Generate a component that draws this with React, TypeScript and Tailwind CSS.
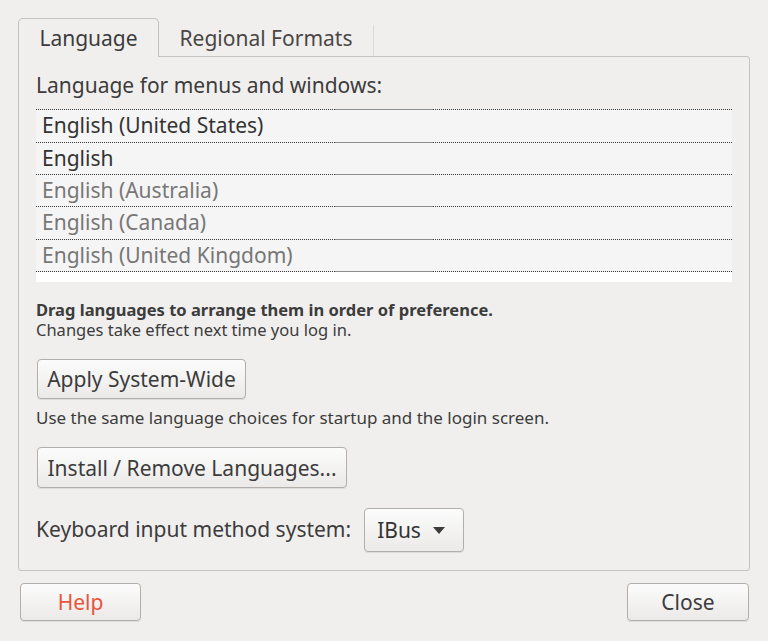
import React from 'react';

const font = { fontFamily: '"Noto Sans", "DejaVu Sans", sans-serif' };

const Separator = () => (
  <div className="flex h-px">
    <div className="w-[299px] border-t border-dotted border-[#3a3a3a]" />
    <div className="w-[98px] border-t border-[#8e8e8e]" />
    <div className="flex-1 border-t border-dotted border-[#3a3a3a]" />
  </div>
);

const languages = [
  { name: 'English (United States)', active: true, h: 'h-[32px]' },
  { name: 'English', active: true, h: 'h-[31px]' },
  { name: 'English (Australia)', active: false, h: 'h-[31px]' },
  { name: 'English (Canada)', active: false, h: 'h-[32px]' },
  { name: 'English (United Kingdom)', active: false, h: 'h-[31px]' },
];

const GtkButton: React.FC<{ className?: string; children: React.ReactNode }> = ({ className = '', children }) => (
  <button
    className={`rounded-[4px] border border-[#b2afab] bg-gradient-to-b from-[#fcfcfc] to-[#ebeae8] shadow-[0_1px_0_rgba(0,0,0,0.08)] text-[21px] leading-[26px] text-[#3c3c3c] ${className}`}
  >
    {children}
  </button>
);

const App: React.FC = () => {
  return (
    <div className="w-[768px] h-[641px] bg-[#f0efee] pt-[18px] px-[18px] flex flex-col text-[#3c3c3c]" style={font}>
      {/* tabs */}
      <div className="flex items-end h-[38px] relative z-10">
        <div className="w-[141px] h-[39px] -mb-px border border-b-0 border-[#c5c3c0] rounded-t-[5px] bg-[#f0efee] flex items-center justify-center text-[21px] text-[#3c3c3c] pt-[1px]">
          Language
        </div>
        <div className="w-[215px] h-[31px] border-r border-[#dcdad7] flex items-center justify-center text-[21px] text-[#4a4646] pb-[4px]">
          Regional Formats
        </div>
      </div>

      {/* panel */}
      <div className="w-[732px] h-[515px] border border-[#c5c3c0] rounded-b-[3px] rounded-tr-[3px] pl-[17px] pr-[17px] pt-[16px] flex flex-col">
        <div className="text-[21px] leading-[24px] text-[#3c3c3c]">Language for menus and windows:</div>

        <div className="mt-[12px] flex flex-col">
          {languages.map((l) => (
            <div key={l.name} className="flex flex-col">
              <Separator />
              <div
                className={`${l.h} bg-[#f5f5f5] flex items-center pl-[6px] text-[21px] ${
                  l.active ? 'text-[#333333]' : 'text-[#777777]'
                }`}
              >
                {l.name}
              </div>
            </div>
          ))}
          <Separator />
          <div className="h-[10px] bg-white" />
        </div>

        <div className="mt-[18px] leading-[20px]">
          <div className="font-bold text-[16.5px]">Drag languages to arrange them in order of preference.</div>
          <div className="text-[16.5px]">Changes take effect next time you log in.</div>
        </div>

        <GtkButton className="mt-[19px] w-[209px] h-[40px] ml-px">Apply System-Wide</GtkButton>

        <div className="mt-[9px] text-[17px] leading-[20px]">
          Use the same language choices for startup and the login screen.
        </div>

        <GtkButton className="mt-[19px] w-[310px] h-[41px] ml-px">Install / Remove Languages...</GtkButton>

        <div className="mt-[20px] flex items-center gap-[13px]">
          <span className="text-[21px]">Keyboard input method system:</span>
          <GtkButton className="w-[100px] h-[44px] flex items-center justify-between pl-[12px] pr-[18px]">
            <span className="text-[#333]">IBus</span>
            <svg width="12" height="7" viewBox="0 0 12 7">
              <path d="M0 0 L12 0 L6 7 Z" fill="#3c3c3c" />
            </svg>
          </GtkButton>
        </div>
      </div>

      {/* bottom buttons */}
      <div className="mt-[12px] flex justify-between pl-[2px] pr-px">
        <GtkButton className="w-[121px] h-[38px] text-[#e8543c]">Help</GtkButton>
        <GtkButton className="w-[122px] h-[38px]">Close</GtkButton>
      </div>
    </div>
  );
};

export default App;
